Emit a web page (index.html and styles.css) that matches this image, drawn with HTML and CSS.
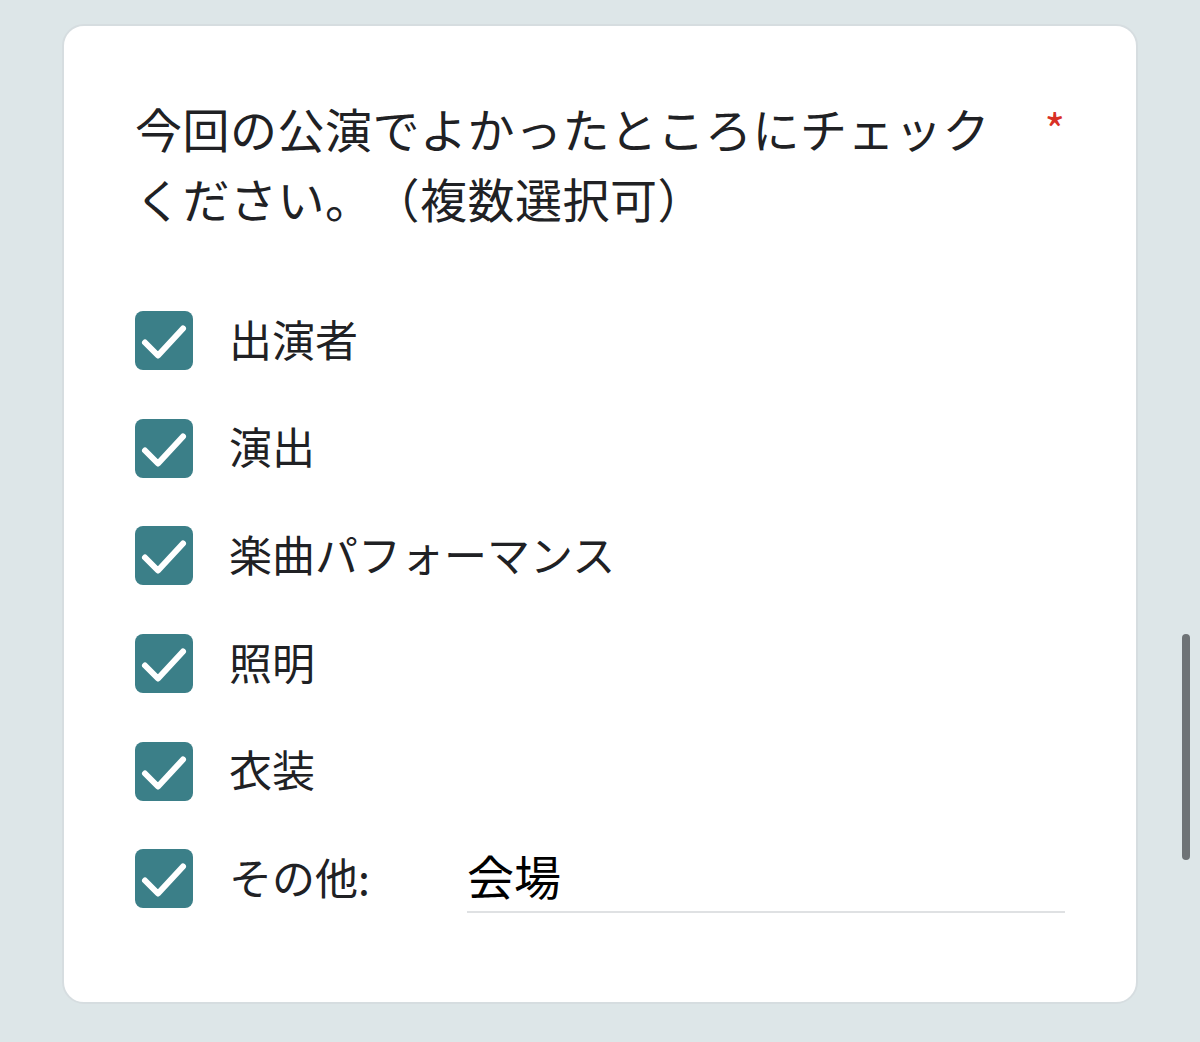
FILE: index.html
```html
<!DOCTYPE html>
<html lang="ja">
<head>
    <meta charset="UTF-8">
    <meta name="viewport" content="width=device-width, initial-scale=1.0">
    <title>アンケート</title>
    <link rel="stylesheet" href="styles.css">
</head>
<body>
    <div class="card">
        <div class="question">
            <div class="question-title">今回の公演でよかったところにチェック<br>ください。（複数選択可）</div>
            <span class="required">*</span>
        </div>

        <div class="options">
            <label class="option">
                <span class="checkbox"><svg viewBox="0 0 58 58"><path d="M10 31 L23 44 L48 17"/></svg></span>
                <span class="option-label">出演者</span>
            </label>
            <label class="option">
                <span class="checkbox"><svg viewBox="0 0 58 58"><path d="M10 31 L23 44 L48 17"/></svg></span>
                <span class="option-label">演出</span>
            </label>
            <label class="option">
                <span class="checkbox"><svg viewBox="0 0 58 58"><path d="M10 31 L23 44 L48 17"/></svg></span>
                <span class="option-label">楽曲パフォーマンス</span>
            </label>
            <label class="option">
                <span class="checkbox"><svg viewBox="0 0 58 58"><path d="M10 31 L23 44 L48 17"/></svg></span>
                <span class="option-label">照明</span>
            </label>
            <label class="option">
                <span class="checkbox"><svg viewBox="0 0 58 58"><path d="M10 31 L23 44 L48 17"/></svg></span>
                <span class="option-label">衣装</span>
            </label>
            <div class="option">
                <span class="checkbox"><svg viewBox="0 0 58 58"><path d="M10 31 L23 44 L48 17"/></svg></span>
                <span class="option-label other-label">その他:</span>
                <div class="other-input">会場</div>
            </div>
        </div>
    </div>

    <div class="scrollbar"></div>
</body>
</html>
```

FILE: styles.css
```css
body {
    margin: 0;
    background: #dde6e8;
    font-family: "Noto Sans CJK JP", "Noto Sans", sans-serif;
    color: #202124;
    height: 1042px;
    overflow: hidden;
}
.card {
    margin: 24px 0 0 62px;
    width: 1076px;
    height: 980px;
    background: #fff;
    border: 2px solid #d6dde0;
    border-radius: 22px;
    padding: 67px 71px 0 71px;
    box-sizing: border-box;
}
.question {
    display: flex;
    justify-content: space-between;
}
.question-title {
    font-size: 47px;
    line-height: 70px;
    letter-spacing: 0.5px;
    text-spacing-trim: space-all;
}
.required {
    color: #d93025;
    font-size: 44px;
    line-height: 70px;
}
.options {
    margin-top: 54px;
}
.option {
    display: flex;
    align-items: center;
    height: 107.6px;
}
.checkbox {
    width: 58px;
    height: 59px;
    border-radius: 8px;
    background: #3b7f88;
    flex-shrink: 0;
    margin-right: 36px;
}
.checkbox svg {
    width: 58px;
    height: 59px;
    display: block;
}
.checkbox path {
    fill: none;
    stroke: #fff;
    stroke-width: 6;
    stroke-linecap: round;
    stroke-linejoin: round;
}
.option-label {
    font-size: 43px;
    line-height: 60px;
    margin-bottom: 6px;
}
.other-label {
    width: 238px;
}
.other-input {
    flex: 1;
    font-size: 47px;
    line-height: 60px;
    color: #000;
    border-bottom: 2px solid #dfe1e3;
    padding-bottom: 6px;
}
.scrollbar {
    position: absolute;
    left: 1182px;
    top: 634px;
    width: 8px;
    height: 226px;
    border-radius: 4px;
    background: #6e7376;
}
```
